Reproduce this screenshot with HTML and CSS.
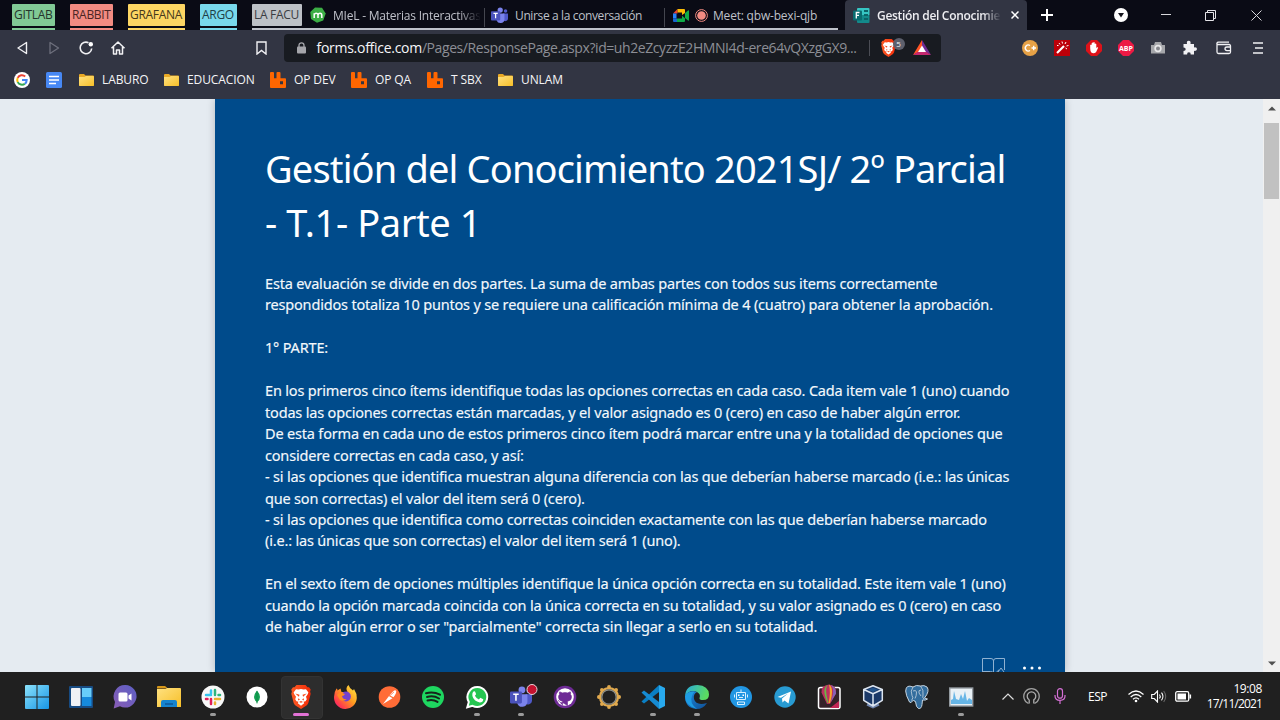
FILE: index.html
```html
<!DOCTYPE html>
<html lang="es">
<head>
<meta charset="utf-8">
<title>Gestión del Conocimiento 2021SJ/ 2º Parcial - T.1- Parte 1</title>
<link rel="stylesheet" href="styles.css">
</head>
<body>
<svg class="defs" width="0" height="0">
  <defs>
    <linearGradient id="gWin" x1="0" y1="0" x2="1" y2="1"><stop offset="0" stop-color="#8be2fb"/><stop offset="1" stop-color="#1795e5"/></linearGradient>
    <linearGradient id="gFolder" x1="0" y1="0" x2="1" y2="1"><stop offset="0" stop-color="#ffe180"/><stop offset="1" stop-color="#f7bf28"/></linearGradient>
    <linearGradient id="gBrave" x1="0" y1="0" x2="1" y2="0"><stop offset="0" stop-color="#fb5a24"/><stop offset="1" stop-color="#f42b08"/></linearGradient>
    <linearGradient id="gFox" x1="1" y1="0" x2="0" y2="1"><stop offset="0" stop-color="#fff14a"/><stop offset=".45" stop-color="#ff9a1f"/><stop offset=".8" stop-color="#ff3750"/><stop offset="1" stop-color="#e2209a"/></linearGradient>
    <linearGradient id="gEdge" x1="0" y1="0" x2="1" y2=".3"><stop offset="0" stop-color="#27a9e0"/><stop offset="1" stop-color="#5bdc60"/></linearGradient>
    <linearGradient id="gEdge2" x1="0" y1="0" x2="1" y2="1"><stop offset="0" stop-color="#1d8ce0"/><stop offset="1" stop-color="#104f94"/></linearGradient>
    <linearGradient id="gChat" x1="0" y1="1" x2="1" y2="0"><stop offset="0" stop-color="#8a5db5"/><stop offset="1" stop-color="#5b5fc4"/></linearGradient>
    <symbol id="lion" viewBox="0 0 20 24">
      <path d="M5.500 0h9l2 2.300 1.500-.1L19.700 4.500l-.6 2.200.6 2-2.300 9.100q-.5 1.600-1.900 2.600L10 24l-5.500-3.600q-1.400-1-1.900-2.600L.3 8.700l.6-2-.6-2.200L2 2.200l1.500.1z" fill="url(#gBrave)"/>
      <path d="M5 4.200l2.500.4L10 4l2.500.6 2.500-.4 2.400 3.300-.7 1.800-1.700 2.400.8 2.500-1.300 2-2 .6.700 1.400L10 20.800l-3.200-2.600.7-1.400-2-.6-1.300-2 .8-2.500-1.700-2.400-.7-1.800z" fill="#fff"/>
      <path d="M4.300 8.500l4.200 1.200-.6 2zM15.700 8.500l-4.200 1.200.6 2zM7.300 13.200l1.700 1.300-2 .9zM12.700 13.200L11 14.500l2 .9zM8 17l2-1 2 1-2 .7z" fill="#f4461a"/>
    </symbol>
    <symbol id="folder" viewBox="0 0 16 16"><path d="M1 3q0-1 1-1h4l1.500 1.500H15q1 0 1 1V13q0 1-1 1H2q-1 0-1-1z" fill="#e9a925"/><path d="M1 5h5.500L8 4h7q1 0 1 1v8q0 1-1 1H2q-1 0-1-1z" fill="url(#gFolder)"/></symbol>
    <symbol id="rabbit" viewBox="0 0 16 16"><path d="M0 1q0-1 1-1h2q1 0 1 1v5.300h2.500V1q0-1 1-1h2q1 0 1 1v5.300h4.700q.8 0 .8.900V15q0 1-1 1H1q-1 0-1-1zM10 9.200v3h3v-3z" fill="#ff6600" fill-rule="evenodd"/></symbol>
    <symbol id="teams" viewBox="0 0 24 24">
      <circle cx="13" cy="4.300" r="3.700" fill="#7b83eb"/><circle cx="20.500" cy="5.500" r="2.500" fill="#5059c9"/>
      <path d="M17 9h7v7a4 4 0 0 1-6 3.500z" fill="#5059c9"/><path d="M8 9h11v8.500a5.700 5.700 0 0 1-11 1.500z" fill="#7b83eb"/>
      <rect y="6" width="13" height="13" rx="1.200" fill="#4b53bc"/><path d="M3.500 9h6M6.500 9v7" stroke="#fff" stroke-width="1.700"/>
    </symbol>
  </defs>
</svg>

<div class="screen">
  <header class="browser">
    <div class="tabstrip">
      <div class="group g-green"><span>GITLAB</span></div>
      <div class="group g-red"><span>RABBIT</span></div>
      <div class="group g-yellow"><span>GRAFANA</span></div>
      <div class="group g-cyan"><span>ARGO</span></div>
      <div class="open-group">
        <div class="group g-grey"><span>LA FACU</span></div>
        <div class="tab tab-miel">
          <svg width="16" height="16" viewBox="0 0 16 16"><path d="M5 .5l7 .3 3.700 5.700-2.500 7L7 15.700 1 12 .3 5z" fill="#3cae45"/><path d="M4.200 11V6.200M4.200 7.500q1-1.500 2.200-1.200Q8 6.500 8 8v3M8 8q.5-1.700 2-1.700 1.800 0 1.800 2V11" fill="none" stroke="#fff" stroke-width="1.500"/></svg>
          <span class="fade">MIeL - Materias Interactivas</span>
        </div>
        <div class="tab tab-teams">
          <svg width="17" height="17"><use href="#teams"/></svg>
          <span>Unirse a la conversación</span>
        </div>
        <div class="tab tab-meet">
          <svg width="16" height="13" viewBox="0 0 16 13"><path d="M0 4.500L4.500 0v4.500z" fill="#ea4335"/><path d="M4.500 0H11q1 0 1 1v3L9 6V3.500H4.500z" fill="#fbbc04"/><path d="M0 4.500h3.500v5H0z" fill="#2684fc"/><path d="M0 9.500h4V13H1q-1 0-1-1z" fill="#1767d2"/><path d="M4 9.500h5V6.800l3 2.500V12q0 1-1 1H4zM12 4l3-2.500q1-.6 1 .5v9q0 1-1 .4L12 9z" fill="#0eac47"/></svg>
          <svg class="rec" width="13" height="13" viewBox="0 0 13 13"><circle cx="6.500" cy="6.500" r="5.900" fill="none" stroke="#f28b82"/><circle cx="6.500" cy="6.500" r="4.300" fill="#f28b82"/></svg>
          <span>Meet: qbw-bexi-qjb</span>
        </div>
      </div>
      <div class="tab-active">
        <svg width="17" height="15" viewBox="0 0 17 15"><rect x="4" width="12.500" height="7.500" rx="1" fill="#36c5c3"/><rect x="4" y="7" width="12.500" height="8" rx="1" fill="#138a8b"/><path d="M11 3h4M11 7h4M11 11h4" stroke="#0a6468" stroke-width="2"/><rect y="2.500" width="9" height="10" rx="1" fill="#0a6c70"/><path d="M3.300 10.500v-6h3.200M3.300 7.300h2.700" stroke="#fff" stroke-width="1.300" fill="none"/></svg>
        <span class="fade">Gestión del Conocimie</span>
        <svg class="x" width="8" height="8" viewBox="0 0 8 8"><path d="M.5.500l7 7M7.500.500l-7 7" stroke="#fff" stroke-width="1.500"/></svg>
      </div>
      <svg class="plus" width="12" height="12" viewBox="0 0 12 12"><path d="M6 0v12M0 6h12" stroke="#fff" stroke-width="2"/></svg>
      <div class="winctl">
        <svg width="14" height="14" viewBox="0 0 14 14"><circle cx="7" cy="7" r="7" fill="#fff"/><path d="M4 5h6L7 9.500z" fill="#15151d"/></svg>
        <svg width="10" height="10" viewBox="0 0 10 10"><path d="M0 4.500h10" stroke="#d8d8dc"/></svg>
        <svg width="11" height="11" viewBox="0 0 11 11"><path d="M.5 2.500h8v8h-8zM2.500 2.500v-2h8v8h-2" fill="none" stroke="#e4e4e8"/></svg>
        <svg class="close" width="11" height="11" viewBox="0 0 11 11"><path d="M.5.500l10 10M10.500.500l-10 10" stroke="#d8d8dc"/></svg>
      </div>
    </div>

    <div class="toolbar">
      <div class="nav">
        <svg width="16" height="16" viewBox="0 0 16 16"><path d="M12.500 2.500v11L4 8z" fill="none" stroke="#f1f1f4" stroke-width="1.400" stroke-linejoin="round"/></svg>
        <svg width="16" height="16" viewBox="0 0 16 16"><path d="M4 2.500v11L12.500 8z" fill="none" stroke="#6d6f7c" stroke-width="1.300" stroke-linejoin="round"/></svg>
        <svg width="16" height="16" viewBox="0 0 16 16"><path d="M10.500 2.700A5.800 5.800 0 1 0 13.700 8.500" fill="none" stroke="#f1f1f4" stroke-width="1.600"/><circle cx="12.800" cy="4.200" r="2.200" fill="#fff"/></svg>
        <svg width="16" height="16" viewBox="0 0 16 16"><path d="M1.500 8.300L8 2l6.500 6.300M3.500 7v7h3v-4h3v4h3V7" fill="none" stroke="#f1f1f4" stroke-width="1.500" stroke-linejoin="round"/></svg>
      </div>
      <svg class="bookmark" width="11" height="14" viewBox="0 0 11 14"><path d="M1 1h9v12L5.500 9.500 1 13z" fill="none" stroke="#f1f1f4" stroke-width="1.400"/></svg>
      <div class="address">
        <svg class="lock" width="9" height="12" viewBox="0 0 9 12"><path d="M2 5V3.300a2.500 2.500 0 0 1 5 0V5" fill="none" stroke="#a5a6ab" stroke-width="1.300"/><rect y="4.500" width="9" height="7" rx="1" fill="#a5a6ab"/></svg>
        <span class="url"><b>forms.office.com</b>/Pages/ResponsePage.aspx?id=uh2eZcyzzE2HMNI4d-ere64vQXzgGX9...</span>
        <i class="divider"></i>
        <span class="shield"><svg width="15" height="18"><use href="#lion"/></svg><em>5</em></span>
        <svg class="bat" width="18" height="15" viewBox="0 0 18 15"><path d="M9 0L0 15l9-5z" fill="#ff5424"/><path d="M9 0l9 15-9-5z" fill="#702b95"/><path d="M0 15h18l-9-6z" fill="#c42870"/><path d="M9 5.500l4 6.500H5z" fill="#fff"/></svg>
      </div>
      <div class="exts">
        <svg width="16" height="16" viewBox="0 0 16 16"><circle cx="8" cy="8" r="8" fill="#e6a146"/><path d="M8 5.500a3 3 0 1 0 0 5M9.500 8h4.500M11.700 5.800v4.500" fill="none" stroke="#fff" stroke-width="1.400"/></svg>
        <svg width="16" height="16" viewBox="0 0 16 16"><rect width="16" height="16" fill="#bd0009"/><path d="M3 13l7-7" stroke="#fff" stroke-width="2.200"/><path d="M5 3l1 1.500M8 1.500l.5 2M12 2l-1 2M14.500 5.500l-2 .5M13 9l-1.500-1M3 5.500h1.500" stroke="#fff"/></svg>
        <svg width="16" height="16" viewBox="0 0 16 16"><path d="M5 0h6l5 5v6l-5 5H5l-5-5V5z" fill="#dd1219"/><path d="M4.200 8.300V5q1-1 1.500 0V3q.8-1 1.500 0v-.6q.8-1 1.500 0V4q.8-1 1.600 0v4l1-.8q1.300-.2.7.8L10 12.300q-2.500 1.700-4.700.2-1.100-1.500-1.100-4.200z" fill="#fff"/></svg>
        <svg width="16" height="16" viewBox="0 0 16 16"><path d="M5 0h6l5 5v6l-5 5H5l-5-5V5z" fill="#ed1944"/><text x="8" y="10.700" text-anchor="middle" textLength="14" lengthAdjust="spacingAndGlyphs" class="abp">ABP</text></svg>
        <svg width="16" height="16" viewBox="0 0 16 16"><path d="M1 5h3l1-3h6l1 3h3v8.500H1z" fill="#a5a6aa"/><circle cx="8" cy="8.500" r="3.700" fill="#e7e7e9"/><circle cx="8" cy="8.500" r="2" fill="#85868c"/></svg>
        <svg width="16" height="16" viewBox="0 0 16 16"><path d="M1.500 4H5q-.7-3.200 1.700-3.200T8.500 4H12v3.500q3-.6 3 1.600T12 10.800v3.700H8.700q.2-2.300-1.800-2.300t-1.800 2.300H1.500V11q2.200 0 2.200-1.800T1.500 7.500z" fill="#f1f1f4"/></svg>
        <svg width="16" height="16" viewBox="0 0 16 16"><path d="M1 4V12q0 1.500 1.500 1.500H13q1.500 0 1.500-1.500V6Q14.500 4.500 13 4.500H2Q.5 4.500 1 3q.3-.8 1.500-.8H13M15 7h-4q-2 0-2 1.800t2 1.800h4" fill="none" stroke="#f1f1f4" stroke-width="1.300"/></svg>
        <svg width="12" height="14" viewBox="0 0 12 14"><path d="M1 2h10M3 7h8M1 12h10" stroke="#f1f1f4" stroke-width="1.500"/></svg>
      </div>
    </div>

    <div class="bookmarks">
      <svg class="google" width="16" height="16" viewBox="0 0 16 16"><circle cx="8" cy="8" r="8" fill="#fff"/><g fill="none" stroke-width="2"><path d="M11.200 4.500A4.800 4.800 0 0 0 3.700 5.900" stroke="#ea4335"/><path d="M3.700 5.900a4.800 4.800 0 0 0 0 4.200" stroke="#fbbc05"/><path d="M3.700 10.100a4.800 4.800 0 0 0 7.200 1.600" stroke="#34a853"/><path d="M10.900 11.700A4.500 4.500 0 0 0 12.700 8H8" stroke="#4285f4"/></g></svg>
      <svg class="docs" width="16" height="16" viewBox="0 0 16 16"><rect width="16" height="16" rx="1.500" fill="#4788f4"/><path d="M3 4.500h10M3 8h10M3 11.500h7" stroke="#fff" stroke-width="1.700"/></svg>
      <a class="bm b1"><svg width="16" height="16"><use href="#folder"/></svg><span>LABURO</span></a>
      <a class="bm b2"><svg width="16" height="16"><use href="#folder"/></svg><span>EDUCACION</span></a>
      <a class="bm b3"><svg width="16" height="16"><use href="#rabbit"/></svg><span>OP DEV</span></a>
      <a class="bm b4"><svg width="16" height="16"><use href="#rabbit"/></svg><span>OP QA</span></a>
      <a class="bm b5"><svg width="16" height="16"><use href="#rabbit"/></svg><span>T SBX</span></a>
      <a class="bm b6"><svg width="16" height="16"><use href="#folder"/></svg><span>UNLAM</span></a>
    </div>
  </header>

  <main class="viewport">
    <section class="form">
      <h1><span class="t1">Gestión del Conocimiento 2021SJ/ 2º Parcial</span><br><span class="t2">- T.1- Parte 1</span></h1>
      <div class="intro">
        <p>Esta evaluación se divide en dos partes. La suma de ambas partes con todos sus items correctamente<br>respondidos totaliza 10 puntos y se requiere una calificación mínima de 4 (cuatro) para obtener la aprobación.</p>
        <p>1° PARTE:</p>
        <p>En los primeros cinco ítems identifique todas las opciones correctas en cada caso. Cada item vale 1 (uno) cuando<br>todas las opciones correctas están marcadas, y el valor asignado es 0 (cero) en caso de haber algún error.<br>De esta forma en cada uno de estos primeros cinco ítem podrá marcar entre una y la totalidad de opciones que<br>considere correctas en cada caso, y así:<br>- si las opciones que identifica muestran alguna diferencia con las que deberían haberse marcado (i.e.: las únicas<br>que son correctas) el valor del item será 0 (cero).<br>- si las opciones que identifica como correctas coinciden exactamente con las que deberían haberse marcado<br>(i.e.: las únicas que son correctas) el valor del item será 1 (uno).</p>
        <p>En el sexto ítem de opciones múltiples identifique la única opción correcta en su totalidad. Este item vale 1 (uno)<br>cuando la opción marcada coincida con la única correcta en su totalidad, y su valor asignado es 0 (cero) en caso<br>de haber algún error o ser "parcialmente" correcta sin llegar a serlo en su totalidad.</p>
      </div>
      <div class="form-tools">
        <svg width="24" height="20" viewBox="0 0 24 20"><path d="M.5 18V.500h8.500q2.500 0 2.500 2.500v16M11.500 3Q11.500.500 14 .500h8.500V12M.500 13.500h8q3 0 3 2M14 15q2-3 3-3M16 14l3-4 3 4" fill="none" stroke="#8fb1d1"/></svg>
        <svg width="20" height="4" viewBox="0 0 20 4"><circle cx="2.500" cy="2" r="1.500" fill="#fff"/><circle cx="10" cy="2" r="1.500" fill="#fff"/><circle cx="17.500" cy="2" r="1.500" fill="#fff"/></svg>
      </div>
    </section>
    <aside class="scrollbar">
      <svg width="8" height="5" viewBox="0 0 8 5"><path d="M0 4.500h8L4 .500z" fill="#505050"/></svg>
      <i class="thumb"></i>
      <svg width="8" height="5" viewBox="0 0 8 5"><path d="M0 .500h8L4 4.500z" fill="#505050"/></svg>
    </aside>
  </main>

  <footer class="taskbar">
    <div class="apps">
      <div class="app"><svg viewBox="0 0 24 24"><path d="M0 1q0-1 1-1h10.500v11.500H0zM12.500 0H23q1 0 1 1v10.500H12.500zM0 12.500h11.500V24H1q-1 0-1-1zM12.500 12.500H24V23q0 1-1 1H12.500z" fill="url(#gWin)"/></svg></div>
      <div class="app"><svg viewBox="0 0 24 24"><rect y="1" width="24" height="22" rx="1" fill="#174b82"/><rect x="2" y="3" width="9.500" height="18" rx="1" fill="#f0f2f5"/><rect x="13" y="3" width="9.500" height="9" fill="#67cdfa"/><path d="M13 12h9.500v9H13z" fill="#168add"/></svg></div>
      <div class="app"><svg viewBox="0 0 24 24"><path d="M12.500 0A11.300 11.300 0 1 1 7 21.300L.7 23.500 2 17A11.500 11.500 0 0 1 12.500 0z" fill="url(#gChat)"/><rect x="5.500" y="7.500" width="9" height="9" rx="1.500" fill="#fff"/><path d="M15.500 10.500l3-2v7l-3-2z" fill="#fff"/></svg></div>
      <div class="app"><svg viewBox="0 0 24 24"><path d="M0 2q0-1 1-1h7l3 2.500H0z" fill="#d79718"/><path d="M0 4h8.500l1.500-1H23q1 0 1 1v18H0z" fill="url(#gFolder)"/><path d="M4 22v-5q0-2 2-2h12q2 0 2 2v5z" fill="#1583ce"/><path d="M8 19h8" stroke="#0c5697" stroke-width="1.500"/></svg></div>
      <div class="app run"><svg viewBox="0 0 24 24"><circle cx="12" cy="12" r="11.500" fill="#f8f8f8"/><g fill="none" stroke-width="2.500" stroke-linecap="round"><path d="M10 8.500V5.500M5 10h5" stroke="#36c5f0"/><path d="M14 5v5M17.500 10h1.500" stroke="#2eb67d"/><path d="M14 14h5M14 17.500V19" stroke="#ecb22e"/><path d="M10 14v5M5 14h1.500" stroke="#e01e5a"/></g></svg></div>
      <div class="app"><svg viewBox="0 0 24 24"><circle cx="12" cy="12" r="10.500" fill="#fff"/><path d="M12 5.500q3 3.500 3 6.500t-2.600 5v1.500h-.8V17Q9 15 9 12t3-6.500z" fill="#13a153"/><path d="M12 6v12" stroke="#0b7d3e" stroke-width=".6"/></svg></div>
      <div class="app run current"><svg viewBox="0 0 24 24"><use href="#lion" x="2" width="20" height="24"/></svg></div>
      <div class="app"><svg viewBox="0 0 24 24"><path d="M3.500 3.500q1 0 1 2l3-2 1 3.500h6Q12 3 15.500 0q1 3.500 4.500 5.500l1-1.500q3 4.500 2.800 9A11.400 11.400 0 1 1 1 12Q1 7 3.500 3.500z" fill="url(#gFox)"/><circle cx="13" cy="11.500" r="4.900" fill="#7542cf"/><path d="M4 10q3-4 6.500-1.500l1.500.5q-1 2-3 2 1 4 5 3-3 3-7 1z" fill="#ff8b22"/></svg></div>
      <div class="app"><svg viewBox="0 0 24 24"><circle cx="12.500" cy="12" r="10.800" fill="#ff6c37"/><path d="M6 19l6-8 3.500 2.200zM12.500 10.200l4-4.200q1.800-1.500 2.700 0 .6 1.800-2.700 6.200z" fill="#fff"/><path d="M12.500 11l4.500-4" stroke="#ff6c37" stroke-width=".7"/></svg></div>
      <div class="app"><svg viewBox="0 0 24 24"><circle cx="12" cy="12" r="11" fill="#1ed760"/><path d="M5 8.200q7.500-2 14 1.500M6 12q6.500-1.800 12 1.500M6.500 15.500q5.500-1.500 10 1.400" fill="none" stroke="#17251b" stroke-width="2" stroke-linecap="round"/></svg></div>
      <div class="app run"><svg viewBox="0 0 24 24"><path d="M12.500 2A10 10 0 1 1 7.500 20.800L2.300 22.300 3.800 17A10 10 0 0 1 12.500 2z" fill="#25c651" stroke="#fff" stroke-width="2"/><path d="M8 7q1.700-1.700 2.600.8l.5 1.500-1.200 1.500q1.200 2.500 4 3.600l1.400-1.600 3 1.500q-.3 3.200-3.500 3.200Q8.700 16.200 7.400 11 7 8.500 8 7z" fill="#fff"/></svg></div>
      <div class="app run"><svg viewBox="0 0 24 24"><use href="#teams" y="1" width="24" height="22"/><circle cx="23" cy="4.500" r="5" fill="#c4122f" stroke="#ead6da"/></svg></div>
      <div class="app"><svg viewBox="0 0 24 24"><circle cx="12" cy="12" r="11.300" fill="#6e2b96"/><circle cx="12" cy="12" r="8.800" fill="#fff"/><path d="M9.500 20.500v-3q-3 .7-3.700-1.700L4.800 15M9.500 17.500v-1.200q-4-.5-4-4.300 0-1.700 1-2.600-.3-1.600.1-2.500 1.400 0 2.500 1 2.900-.7 5.800 0 1.100-1 2.500-1 .4.900.1 2.500 1 .9 1 2.600 0 3.800-4 4.300v4.200z" fill="#6e2b96" stroke="#6e2b96" stroke-width=".6"/></svg></div>
      <div class="app"><svg viewBox="0 0 24 24"><circle cx="12" cy="12" r="8.900" fill="none" stroke="#e0a94e" stroke-width="2.400"/><g fill="#e0a94e"><circle cx="12" cy="1.900" r="1.900"/><circle cx="19.100" cy="4.900" r="1.900"/><circle cx="22.100" cy="12" r="1.900"/><circle cx="19.100" cy="19.100" r="1.900"/><circle cx="12" cy="22.100" r="1.900"/><circle cx="4.900" cy="19.100" r="1.900"/><circle cx="1.900" cy="12" r="1.900"/><circle cx="4.900" cy="4.900" r="1.900"/></g><circle cx="12" cy="12" r="7.200" fill="none" stroke="#8b8f8c" stroke-width="1.300"/></svg></div>
      <div class="app run"><svg viewBox="0 0 24 24"><path d="M18 0v7L3 18.500.500 16.500z" fill="#0a7fc4"/><path d="M.500 7.500L3 5.500 18 17v7z" fill="#168bd2"/><path d="M18 0l6 3v18l-6 3z" fill="#28a9ed"/></svg></div>
      <div class="app run"><svg viewBox="0 0 24 24"><path d="M0 11Q.8 0 12.500 0 23.500.5 24 9.500q0 5.500-6 5.500-4 0-3.500-2Q16 9 12 7 5 4 0 11z" fill="url(#gEdge)"/><path d="M0 11Q4 4.500 12 7 8 9 9 14q2 7 13 4-4 6.300-11 6Q0 23 0 11z" fill="url(#gEdge2)"/><path d="M7 11Q4 18 12 24 0 21 0 11 2 6 10 6.500 7.500 8 7 11z" fill="#1e9ce3"/></svg></div>
      <div class="app"><svg viewBox="0 0 24 24"><circle cx="12" cy="12" r="11" fill="#2196e3"/><path d="M7.500 7.500h9v7h-9zM8.500 17h7v2.500h-7zM12 7V4.500M5.500 9.500v3M18.500 9.500v3M10 12.500h4" fill="none" stroke="#d8f0ff"/><path d="M9 9.500h1.500V11H9zM13.500 9.500H15V11h-1.500z" fill="#fff"/></svg></div>
      <div class="app"><svg viewBox="0 0 24 24"><circle cx="12" cy="12" r="10.700" fill="#289bd3"/><path d="M4.500 12L18 6.500l-2.500 12-4-3-2 2-.5-4 6-5-7 4.300z" fill="#fff"/></svg></div>
      <div class="app"><svg viewBox="0 0 24 24"><rect x="1.500" y="2.500" width="21.500" height="21" rx="2" fill="#352128" stroke="#fff" stroke-width="1.500"/><path d="M13 23l9-7v7z" fill="#c32656"/><path d="M12-.5Q3.500.500 4.500 7.500L10 19h3l6-10.500Q20 .500 12-.5z" fill="#bd315f"/><path d="M11-.3Q4 3 10.500 18h1Q7 3 11-.3z" fill="#66ba45"/><path d="M12-.5Q14 7 11.500 18h1.500Q17.500 3 12-.5z" fill="#f5a52a"/><path d="M13.500 0Q19 4 13.500 17.500L19 8.500Q19 1.500 13.500 0z" fill="#8464b9"/></svg></div>
      <div class="app"><svg viewBox="0 0 24 24"><path d="M7 18h10l1.500 2.500L12 23.500l-6.500-3z" fill="#6f84ad"/><path d="M12 .8l9.300 3.700v10.800L12 21l-9.300-5.700V4.500z" fill="#1b3968"/><path d="M12 .8l9.300 3.700v10.800L12 21l-9.300-5.700V4.500zM2.700 4.500L12 8.800l9.300-4.300M12 8.800V21" fill="none" stroke="#dce5f0" stroke-width="1.500" stroke-linejoin="round"/><path d="M12 2.800l5 1.900-5 2.200-5-2.200z" fill="#24558c"/></svg></div>
      <div class="app"><svg viewBox="0 0 24 24"><path d="M8 2Q1-1 .7 6q0 4 3.800 11 1.500 1.700 3-1l1-1q0 1 2 1.500.5 6 3 7 3 .5 3.500-4l.5-4.500q3.500.5 5-1l-3-1Q25 6 22 2q-3-2.300-6.500-1Q11-.5 8 2z" fill="#336d9d" stroke="#c7d4df" stroke-width="1"/><path d="M8 2Q5 6 7 10.500q2 2-.5 5M15.500 1Q19 5 18 10q-1 3 1 4M8 6q3-1.500 3.500 1 0 4-1.500 6.500M16 5q-3 0-2 3l2 3" fill="none" stroke="#c7d4df" stroke-width=".8"/></svg></div>
      <div class="app run"><svg viewBox="0 0 24 24"><rect x=".7" y="3" width="23" height="18" fill="#e9f1f6" stroke="#939aa0" stroke-width="1.400"/><path d="M2 19v-4l2-1 1-8 2 8 3 1 2-6 2 5 2-8 2 10 2-3 3 2v4z" fill="#66b5e6"/></svg></div>
    </div>
    <div class="tray">
      <svg class="chev" width="12" height="7" viewBox="0 0 12 7"><path d="M.5 6.500L6 1l5.500 5.500" fill="none" stroke="#dedede" stroke-width="1.200"/></svg>
      <svg class="pod" width="17" height="17" viewBox="0 0 17 17"><path d="M5.500 15.500a7.700 7.700 0 1 1 6 0" fill="none" stroke="#a0a0a0" stroke-width="1.300"/><path d="M6.200 11.800a4.300 4.300 0 1 1 4.600 0v3.700M6.200 11.800v3.700" fill="none" stroke="#b0b0b0" stroke-width="1.300"/></svg>
      <svg class="mic" width="12" height="16" viewBox="0 0 12 16"><rect x="3.500" y=".7" width="5" height="9.500" rx="2.500" fill="none" stroke="#d56fd5" stroke-width="1.200"/><path d="M1 7v1q0 4.300 5 4.300T11 8V7M6 12.300V16" fill="none" stroke="#d56fd5" stroke-width="1.200"/></svg>
      <span class="lang">ESP</span>
      <svg class="wifi" width="16" height="13" viewBox="0 0 16 13"><path d="M.5 4.500q7.500-7 15 0M2.700 7q5.300-5 10.600 0M5 9.300q3-2.700 6 0" fill="none" stroke="#fff" stroke-width="1.200"/><circle cx="8" cy="11" r="1.300" fill="#fff"/></svg>
      <svg class="vol" width="16" height="13" viewBox="0 0 16 13"><path d="M.7 4.500h2.500L6.500 1v11L3.200 8.500H.7z" fill="none" stroke="#fff" stroke-width="1.100"/><path d="M8.500 4.500q1.500 2 0 4M10.500 2.700q3 3.800 0 7.600" fill="none" stroke="#fff" stroke-width="1.100"/><path d="M12.700 1q4 5.500 0 11" fill="none" stroke="#666" stroke-width="1.100"/></svg>
      <svg class="batt" width="17" height="11" viewBox="0 0 17 11"><rect x=".7" y=".7" width="13" height="9.500" rx="1.500" fill="none" stroke="#fff" stroke-width="1.300"/><rect x="2.500" y="2.500" width="8.500" height="6" fill="#fff"/><path d="M15.300 3.500v4" stroke="#fff" stroke-width="1.600"/></svg>
      <div class="clock"><span>19:08</span><span class="date">17/11/2021</span></div>
    </div>
  </footer>
</div>
</body>
</html>
```
FILE: styles.css
```css
* { box-sizing: border-box; }
body { margin: 0; background: #0b0c16; font-family: "Open Sans", "Noto Sans", sans-serif; }
svg { display: block; flex: none; }
.defs { position: absolute; }
.screen { width: 1280px; height: 720px; overflow: hidden; display: flex; flex-direction: column; }

.browser { height: 99px; flex: none; background: #323543; color: #f4f4f6; }
.tabstrip { height: 30px; background: #0a0b15; display: flex; padding-left: 12px; font-size: 12px; white-space: nowrap; }
.group { height: 30px; padding-top: 4px; margin-right: 15px; border-bottom: 2px solid; flex: none; }
.group span { display: block; height: 22px; line-height: 22px; border-radius: 1px; padding-left: 2px; color: #25352d; letter-spacing: -.3px; }
.g-green { width: 43px; border-color: #81c995; } .g-green span { background: #81c995; }
.g-red { width: 43px; border-color: #f28b82; } .g-red span { background: #f28b82; color: #4a2523; }
.g-yellow { width: 57px; border-color: #fdd663; } .g-yellow span { background: #fdd663; color: #45391b; }
.g-cyan { width: 37px; border-color: #78d9ec; } .g-cyan span { background: #78d9ec; color: #203f47; }
.open-group { width: 586px; flex: none; display: flex; border-bottom: 2px solid #bdc1c9; }
.g-grey { width: 50px; border: 0; margin-right: 0; } .g-grey span { background: #bdc1c6; color: #3b3d42; }
.tab { display: flex; align-items: center; color: #bfc1c9; height: 30px; flex: none; letter-spacing: -.37px; }
.tab-miel { width: 183px; padding-left: 8px; gap: 7px; letter-spacing: -.22px; }
.tab-teams { width: 180px; padding-left: 6px; gap: 7px; }
.tab-meet { padding-left: 8px; letter-spacing: -.2px; }
.tab-miel, .tab-teams { background: linear-gradient(#44464f, #44464f) right 8px / 1px 19px no-repeat; }
.tab-meet .rec { margin: 0 5px 0 6px; }
.fade { -webkit-mask-image: linear-gradient(90deg, #000 85%, transparent); mask-image: linear-gradient(90deg, #000 85%, transparent); }
.tab-active { margin-left: 7px; width: 182px; flex: none; background: #323543; border-radius: 4px 4px 0 0; display: flex; align-items: center; padding-left: 8px; font-weight: 600; color: #eeeef2; }
.tab-active .fade { width: 124px; margin-left: 7px; letter-spacing: -.3px; }
.tab-active .x { margin-left: 10px; }
.plus { margin: 9px 0 0 14px; }
.winctl { margin-left: 45px; width: 180px; display: grid; grid-template-columns: repeat(4, 45px); place-items: center; }
.winctl .close { margin-right: -2px; }

.toolbar { height: 35px; display: flex; align-items: center; }
.nav { display: flex; gap: 16px; padding-left: 14px; }
.bookmark { margin-left: 129.5px; }
.address { margin-left: 17px; width: 657px; height: 28px; background: #181b21; border-radius: 4px; display: flex; align-items: center; }
.lock { margin-left: 13px; }
.url { width: 552px; margin-left: 11px; color: #8c8e95; font-size: 14px; white-space: nowrap; letter-spacing: -.42px; }
.url b { color: #f6f6f8; font-weight: 400; letter-spacing: -.28px; }
.divider { width: 1px; height: 16px; background: #4b4d55; }
.shield { position: relative; margin: 0 1px 0 11px; }
.shield em { position: absolute; left: 12px; top: -1px; width: 12px; height: 12px; border-radius: 6px; background: #5d606d; font: 8px/12px "Open Sans", sans-serif; text-align: center; }
.bat { margin-left: 16px; }
.exts { margin-left: 73px; width: 260px; display: grid; grid-template-columns: repeat(6, 32px) 36px 32px; place-items: center; }
.abp { font: 700 7px "Open Sans", sans-serif; fill: #fff; }

.bookmarks { height: 30px; display: flex; align-items: center; padding-left: 14px; font-size: 12px; white-space: nowrap; }
.docs { margin-left: 16px; }
.bm { display: flex; align-items: center; gap: 8px; flex: none; }
.bm span { letter-spacing: -.1px; padding-bottom: 2px; }
.b1 { width: 85px; margin-left: 16px; } .b2 { width: 107px; } .b3 { width: 81px; } .b4 { width: 76px; } .b5 { width: 70px; }

.viewport { height: 573px; flex: none; background: #e5ebf1; display: flex; overflow: hidden; }
.form { margin-left: 215px; width: 850px; height: 573px; background: #004b8b; color: #fff; padding: 42px 50px 0; box-shadow: 0 0 8px rgba(0,0,0,.22); display: flex; flex-direction: column; flex: none; }
h1 { margin: 0; font: 400 38px/54px "Noto Sans", sans-serif; white-space: nowrap; }
.t1 { letter-spacing: -.84px; }
.t2 { letter-spacing: -.4px; }
.intro { margin-top: 24px; font: 14.5px/21.45px "Noto Sans", sans-serif; letter-spacing: -.18px; white-space: nowrap; color: #f3f8fc; -webkit-text-stroke: .15px #f3f8fc; }
.intro p { margin: 0 0 21.45px; }
.form-tools { margin: -1px 0 0 717px; display: flex; gap: 16px; align-items: center; }
.scrollbar { margin-left: auto; width: 17px; background: #f0f0f0; display: flex; flex-direction: column; align-items: center; padding: 7px 0 6px; }
.thumb { width: 15px; height: 76px; margin: 12px 0 auto; background: #c1c1c1; }

.taskbar { height: 48px; flex: none; background: #202020; display: flex; color: #fff; }
.apps { padding-left: 15px; display: flex; }
.app { width: 44px; height: 48px; padding-top: 12.5px; position: relative; display: flex; justify-content: center; align-items: flex-start; }
.app svg { width: 24px; height: 24px; overflow: visible; position: relative; }
.run::after { content: ""; position: absolute; left: 19px; top: 41px; width: 6px; height: 3px; border-radius: 2px; background: #9b9b9b; }
.current::before { content: ""; position: absolute; left: 2px; top: 4px; width: 40px; height: 41px; border-radius: 4px; background: #2d2d2d; border: 1px solid #333; }
.current.run::after { left: 14px; width: 16px; background: #e272d6; }
.tray { display: flex; align-items: center; flex: 1; }
.chev { margin-left: 19px; }
.pod { margin-left: 9px; }
.mic { margin-left: 14px; }
.lang { margin-left: 22px; width: 20px; font-size: 12px; letter-spacing: -.5px; }
.wifi { margin-left: 20px; }
.vol { margin-left: 7px; }
.batt { margin-left: 8px; }
.clock { margin-left: auto; padding-right: 18px; display: flex; flex-direction: column; align-items: flex-end; font-size: 12px; line-height: 15.5px; letter-spacing: -.4px; }
.date { letter-spacing: -.85px; }
```
